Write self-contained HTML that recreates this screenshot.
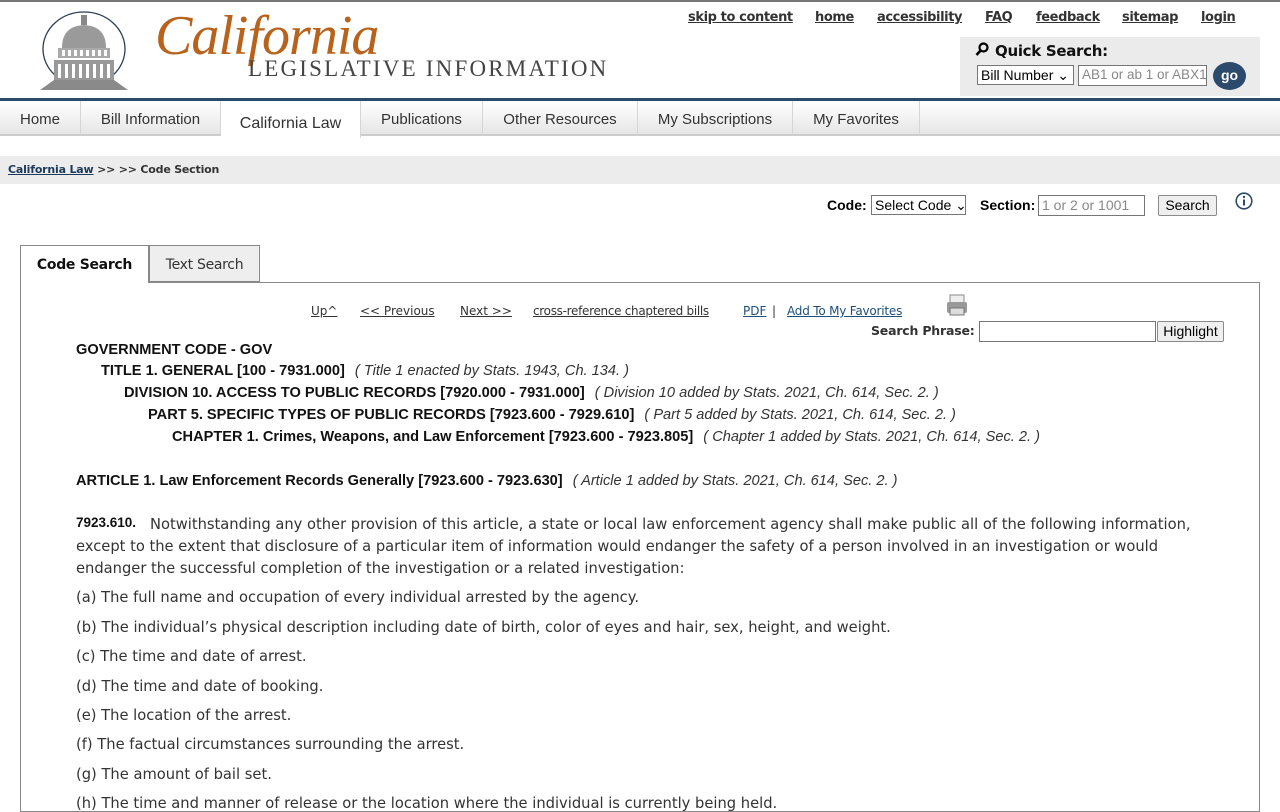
<!DOCTYPE html>
<html><head><meta charset="utf-8"><style>
*{box-sizing:border-box}
body{margin:0;width:1280px;height:800px;overflow:hidden;background:#fff;font-family:"DejaVu Sans",Verdana,sans-serif;color:#333;position:relative}
a{color:#333;text-decoration:underline}
.abs{position:absolute;white-space:nowrap}
.top{position:absolute;left:0;top:0;width:1280px;height:2px;background:#777}
.toplinks a{position:absolute;top:10px;font-size:13px;font-weight:bold;color:#333;letter-spacing:-.4px}
.qs{position:absolute;left:960px;top:37px;width:300px;height:59px;background:#ebebeb}
.bar{position:absolute;left:0;top:98px;width:1280px;height:3px;background:#2c4a6b}
.nav{position:absolute;left:0;top:101px;width:1280px;height:35px;background:linear-gradient(#fff,#e6e6e6);border-bottom:2px solid #ccc}
.nav div{position:absolute;top:0;height:34px;line-height:38px;font-family:"Liberation Sans",Arial,sans-serif;font-size:15px;color:#333;border-right:1px solid #d6d6d6;text-align:center}
.crumb{position:absolute;left:0;top:156px;width:1280px;height:28px;background:#ececec;font-size:11px;font-weight:bold;line-height:28px;padding-left:8px;letter-spacing:-.2px}
.lbl{font-family:"Liberation Sans",Arial,sans-serif;font-weight:bold;font-size:14px;color:#000}
.ctl{position:absolute;border:1px solid #767676;background:#fff;font-family:"Liberation Sans",Arial,sans-serif;font-size:14px;padding:0 3px;line-height:18px;color:#000;white-space:nowrap;overflow:hidden}
.btn{position:absolute;border:1px solid #8a8a8a;background:#efefef;font-family:"Liberation Sans",Arial,sans-serif;font-size:14px;text-align:center;color:#000;border-radius:2px}
.h{position:absolute;font-family:"Liberation Sans",Arial,sans-serif;font-weight:bold;font-size:14.6px;color:#111;white-space:nowrap}
.h i{font-weight:normal;color:#333;margin-left:6px}
.nl a{position:absolute;top:304px;font-size:12px;color:#333;white-space:nowrap}
.p{position:absolute;left:76px;font-size:14.7px;color:#333;white-space:nowrap}
</style></head><body>
<div class="top"></div>
<svg class="abs" style="left:40px;top:10px" width="88" height="82" viewBox="0 0 88 82">
<ellipse cx="44" cy="39" rx="41" ry="37" fill="none" stroke="#2c3e55" stroke-width="1.3"/>
<rect x="41" y="5" width="6" height="10" fill="#888"/>
<path d="M22 38 Q22 16 44 15 Q66 16 66 38Z" fill="#9a9a9a"/>
<rect x="18" y="38" width="52" height="10" fill="#aaa"/>
<g fill="#fff"><rect x="22" y="40" width="3" height="6"/><rect x="28" y="40" width="3" height="6"/><rect x="34" y="40" width="3" height="6"/><rect x="40" y="40" width="3" height="6"/><rect x="46" y="40" width="3" height="6"/><rect x="52" y="40" width="3" height="6"/><rect x="58" y="40" width="3" height="6"/><rect x="64" y="40" width="3" height="6"/></g>
<rect x="14" y="50" width="60" height="20" fill="#999"/>
<g fill="#fff"><rect x="18" y="54" width="3" height="14"/><rect x="25" y="54" width="3" height="14"/><rect x="32" y="54" width="3" height="14"/><rect x="39" y="54" width="3" height="14"/><rect x="46" y="54" width="3" height="14"/><rect x="53" y="54" width="3" height="14"/><rect x="60" y="54" width="3" height="14"/><rect x="67" y="54" width="3" height="14"/></g>
<path d="M0 80 L14 70 L74 70 L88 80Z" fill="#8a8a8a"/>
</svg>
<div class="abs" style="left:155px;top:4px;font-family:'Liberation Serif',serif;font-style:italic;font-size:56px;color:#b8621c;letter-spacing:-1px">California</div>
<div class="abs" style="left:248px;top:56px;font-family:'Liberation Serif',serif;font-size:23px;color:#444;letter-spacing:2.2px">LEGISLATIVE INFORMATION</div>
<div class="toplinks"><a style="left:688px">skip to content</a><a style="left:815px">home</a><a style="left:877px">accessibility</a><a style="left:985px">FAQ</a><a style="left:1036px">feedback</a><a style="left:1122px">sitemap</a><a style="left:1201px">login</a></div>
<div class="qs"></div>
<svg class="abs" style="left:975px;top:42px" width="14" height="15" viewBox="0 0 14 15"><circle cx="8.5" cy="5.5" r="4" fill="none" stroke="#000" stroke-width="2.2"/><path d="M6 8 L1.5 13" stroke="#000" stroke-width="2.6"/></svg>
<div class="abs" style="left:995px;top:42px;font-size:15px;font-weight:bold;color:#111;letter-spacing:-.3px">Quick Search:</div>
<div class="ctl" style="left:977px;top:65px;width:97px;height:20px">Bill Number ⌄</div>
<div class="ctl" style="left:1078px;top:65px;width:129px;height:21px;color:#888;font-size:13.5px">AB1 or ab 1 or ABX1</div>
<div class="abs" style="left:1213px;top:62px;width:33px;height:28px;border-radius:50%;background:#2c4a6b;color:#fff;font-family:'Liberation Sans',sans-serif;font-size:14px;font-weight:bold;text-align:center;line-height:27px">go</div>
<div class="bar"></div>
<div class="nav">
<div style="left:0;width:81px">Home</div>
<div style="left:81px;width:140px">Bill Information</div>
<div style="left:221px;width:140px;background:#fff;height:37px;line-height:46px;font-size:16px">California Law</div>
<div style="left:361px;width:122px">Publications</div>
<div style="left:483px;width:155px">Other Resources</div>
<div style="left:638px;width:155px">My Subscriptions</div>
<div style="left:793px;width:127px">My Favorites</div>
</div>
<div class="crumb"><a style="color:#1d3a5c">California Law</a> &gt;&gt; &gt;&gt; Code Section</div>
<div class="abs lbl" style="left:827px;top:197px">Code:</div>
<div class="ctl" style="left:871px;top:195px;width:95px;height:20px">Select Code ⌄</div>
<div class="abs lbl" style="left:980px;top:197px">Section:</div>
<div class="ctl" style="left:1038px;top:195px;width:107px;height:21px;color:#888">1 or 2 or 1001</div>
<div class="btn" style="left:1158px;top:195px;width:59px;height:21px;line-height:19px">Search</div>
<svg class="abs" style="left:1235px;top:192px" width="18" height="18" viewBox="0 0 18 18"><circle cx="9" cy="9" r="7.8" fill="none" stroke="#2c4a6b" stroke-width="1.6"/><circle cx="9" cy="5" r="1.2" fill="#2c4a6b"/><rect x="8" y="7.5" width="2" height="6" fill="#2c4a6b"/></svg>
<div class="abs" style="left:20px;top:245px;width:129px;height:38px;background:#fff;border:1px solid #888;border-bottom:none;z-index:2;font-size:14px;font-weight:bold;color:#111;line-height:38px;text-align:center;letter-spacing:-.3px">Code Search</div>
<div class="abs" style="left:149px;top:245px;width:111px;height:37px;background:#eee;border:1px solid #888;font-size:14px;line-height:38px;text-align:center;letter-spacing:-.3px">Text Search</div>
<div class="abs" style="left:20px;top:282px;width:1240px;height:530px;border:1px solid #888"></div>
<div class="nl"><a style="left:311px">Up^</a><a style="left:360px">&lt;&lt; Previous</a><a style="left:460px">Next &gt;&gt;</a><a style="left:533px;letter-spacing:-.3px">cross-reference chaptered bills</a><a style="left:743px;color:#1d4f7c">PDF</a><span class="abs" style="left:772px;top:304px;font-size:12px">|</span><a style="left:787px;color:#1d4f7c;letter-spacing:-.2px">Add To My Favorites</a></div>
<svg class="abs" style="left:945px;top:294px" width="24" height="22" viewBox="0 0 24 22"><rect x="5" y="1" width="14" height="8" fill="#eee" stroke="#888"/><rect x="2" y="8" width="20" height="11" rx="2" fill="#999"/><rect x="5" y="14" width="14" height="7" fill="#ddd" stroke="#777"/></svg>
<div class="abs" style="left:871px;top:323px;font-size:12.5px;font-weight:bold;color:#333;letter-spacing:-.2px">Search Phrase:</div>
<div class="ctl" style="left:979px;top:321px;width:177px;height:21px"></div>
<div class="btn" style="left:1157px;top:321px;width:67px;height:21px;line-height:19px">Highlight</div>
<div class="h" style="left:76px;top:342px">GOVERNMENT CODE - GOV</div>
<div class="h" style="left:101px;top:363px">TITLE 1. GENERAL [100 - 7931.000] <i>( Title 1 enacted by Stats. 1943, Ch. 134. )</i></div>
<div class="h" style="left:124px;top:385px">DIVISION 10. ACCESS TO PUBLIC RECORDS [7920.000 - 7931.000] <i>( Division 10 added by Stats. 2021, Ch. 614, Sec. 2. )</i></div>
<div class="h" style="left:148px;top:407px">PART 5. SPECIFIC TYPES OF PUBLIC RECORDS [7923.600 - 7929.610] <i>( Part 5 added by Stats. 2021, Ch. 614, Sec. 2. )</i></div>
<div class="h" style="left:172px;top:429px">CHAPTER 1. Crimes, Weapons, and Law Enforcement [7923.600 - 7923.805] <i>( Chapter 1 added by Stats. 2021, Ch. 614, Sec. 2. )</i></div>
<div class="h" style="left:76px;top:473px">ARTICLE 1. Law Enforcement Records Generally [7923.600 - 7923.630] <i>( Article 1 added by Stats. 2021, Ch. 614, Sec. 2. )</i></div>
<div class="abs" style="left:76px;top:515px;font-family:'Liberation Sans',Arial,sans-serif;font-weight:bold;font-size:13.5px;color:#111">7923.610.</div>
<div class="p" style="left:150px;top:516px">Notwithstanding any other provision of this article, a state or local law enforcement agency shall make public all of the following information,</div>
<div class="p" style="top:538px">except to the extent that disclosure of a particular item of information would endanger the safety of a person involved in an investigation or would</div>
<div class="p" style="top:560px">endanger the successful completion of the investigation or a related investigation:</div>
<div class="p" style="top:589px">(a) The full name and occupation of every individual arrested by the agency.</div>
<div class="p" style="top:619px">(b) The individual’s physical description including date of birth, color of eyes and hair, sex, height, and weight.</div>
<div class="p" style="top:648px">(c) The time and date of arrest.</div>
<div class="p" style="top:678px">(d) The time and date of booking.</div>
<div class="p" style="top:707px">(e) The location of the arrest.</div>
<div class="p" style="top:736px">(f) The factual circumstances surrounding the arrest.</div>
<div class="p" style="top:766px">(g) The amount of bail set.</div>
<div class="p" style="top:795px">(h) The time and manner of release or the location where the individual is currently being held.</div>
</body></html>
